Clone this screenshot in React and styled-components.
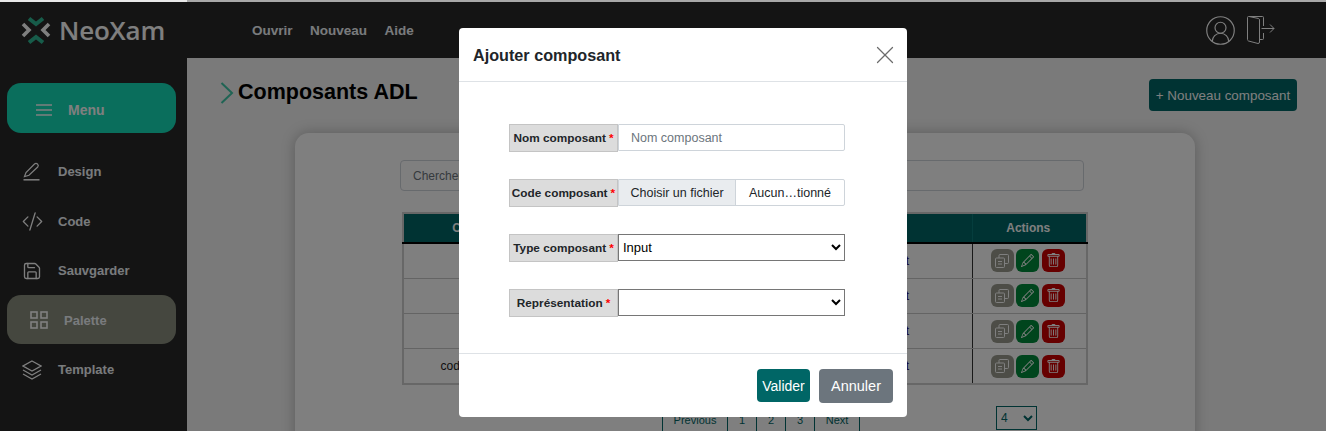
import React from "react";
import styled, { createGlobalStyle } from "styled-components";
import { BsCodeSlash, BsPencil, BsTrash } from "react-icons/bs";
import { CircleUserRound, Save, X } from "lucide-react";

const components = [
  { code: "C1", type: "Input" },
  { code: "C2", type: "Input" },
  { code: "C3", type: "Input" },
  { code: "code-input", type: "Input" },
];

const GlobalStyle = createGlobalStyle`
  html, body {
    margin: 0;
    height: 431px;
    overflow: hidden;
    background: #f4f4f4;
    font-family: "Liberation Sans", Arial, sans-serif;
  }
  * { box-sizing: border-box; }
`;

const Logo = () => (
  <svg width="30" height="29" viewBox="0 0 30 29" fill="none">
    <g stroke="#2fb894" strokeWidth="4">
      <path d="M8 2.5 L15 8 L22 2.5" />
      <path d="M8 26.5 L15 21 L22 26.5" />
    </g>
    <g stroke="#ffffff" strokeWidth="3.6">
      <path d="M2 8 L8 14 L2 20" />
      <path d="M28 8 L22 14 L28 20" />
    </g>
  </svg>
);

const DesignIcon = () => (
  <svg width="18" height="20" viewBox="0 0 18 20" fill="none" stroke="#fff" strokeWidth="1.2">
    <path d="M1.5 14.5 L3 10.5 L11.5 2 Q13 0.8 14.5 2 Q16 3.5 14.7 5 L6 13.3 Z" />
    <path d="M0.5 17.8 H16.5" strokeWidth="1.5" />
  </svg>
);

const PaletteIcon = () => (
  <svg width="18" height="18" viewBox="0 0 18 18" fill="none" stroke="#fff" strokeWidth="1.6">
    <rect x="1" y="1" width="6" height="6" />
    <rect x="11" y="1" width="6" height="6" />
    <rect x="1" y="11" width="6" height="6" />
    <rect x="11" y="11" width="6" height="6" />
  </svg>
);

const LayersIcon = () => (
  <svg width="20" height="20" viewBox="0 0 20 20" fill="none" stroke="#fff" strokeWidth="1.3">
    <path d="M10 1 L19 6 L10 11 L1 6 Z" />
    <path d="M1 10 L10 15 L19 10" />
    <path d="M1 14 L10 19 L19 14" />
  </svg>
);

const DoorIcon = () => (
  <svg width="28" height="28" viewBox="0 0 28 28" fill="none" stroke="#fff" strokeWidth="1">
    <path d="M16.5 10 V1.5 Q16.5 0.5 15.5 0.5 H1.5 Q0.5 0.5 0.5 1.5 V23.5 Q0.5 24.5 1.5 25 L11 27.5 Q12.5 27.5 12.5 26 V4 Q12.5 3 11.5 2.5 L2 0.5" />
    <path d="M12.5 23.5 H15.5 Q16.5 23.5 16.5 22.5 V17" />
    <path d="M14.5 12.5 H27 M23 8.5 L27 12.5 L23 16.5" />
  </svg>
);

const CopyIcon = () => (
  <svg width="14" height="14" viewBox="0 0 14 14" fill="none" stroke="#fff" strokeWidth="1">
    <rect x="0.5" y="4" width="9" height="9.5" rx="1" />
    <path d="M4 4 V1.5 Q4 0.5 5 0.5 H12.5 Q13.5 0.5 13.5 1.5 V8.5 Q13.5 9.5 12.5 9.5 H9.5" />
    <path d="M3 7.5 H7 M3 10 H7" />
  </svg>
);

const MenuIcon = () => (
  <svg width="16" height="12" viewBox="0 0 16 12" stroke="#fff" strokeWidth="1.6">
    <path d="M0 1 H16 M0 6 H16 M0 11 H16" />
  </svg>
);

const App = () => {
  return (
    <>
      <GlobalStyle />
      <TopStrip>
        <StripLeft />
        <StripRight />
      </TopStrip>
      <Header>
        <Brand>
          <Logo />
          <BrandName>NeoXam</BrandName>
        </Brand>
        <Nav>
          <NavLink>Ouvrir</NavLink>
          <NavLink>Nouveau</NavLink>
          <NavLink>Aide</NavLink>
        </Nav>
        <HeaderIcons>
          <CircleUserRound size={33} color="#fff" strokeWidth={0.85} />
          <DoorIcon />
        </HeaderIcons>
      </Header>
      <Body>
        <Sidebar>
          <MenuButton>
            <MenuIcon />
            <span>Menu</span>
          </MenuButton>
          <SideItem>
            <SideIcon><DesignIcon /></SideIcon>
            <span>Design</span>
          </SideItem>
          <SideItem>
            <SideIcon><BsCodeSlash size={21} /></SideIcon>
            <span>Code</span>
          </SideItem>
          <SideItem>
            <SideIcon><Save size={20} strokeWidth={1.6} /></SideIcon>
            <span>Sauvgarder</span>
          </SideItem>
          <SideItem $active>
            <SideIcon><PaletteIcon /></SideIcon>
            <span>Palette</span>
          </SideItem>
          <SideItem>
            <SideIcon><LayersIcon /></SideIcon>
            <span>Template</span>
          </SideItem>
        </Sidebar>
        <Main>
          <TitleRow>
            <Title>
              <svg width="14" height="22" viewBox="0 0 14 22" fill="none" stroke="#3fc8a8" strokeWidth="2">
                <path d="M1.5 1 L12 11 L1.5 21" />
              </svg>
              <h1>Composants ADL</h1>
            </Title>
            <NewButton>+ Nouveau composant</NewButton>
          </TitleRow>
          <Card>
            <Search placeholder="Chercher..." readOnly />
            <Table>
              <colgroup>
                <col style={{ width: 130 }} />
                <col style={{ width: 287 }} />
                <col style={{ width: 152 }} />
                <col style={{ width: 115 }} />
              </colgroup>
              <thead>
                <tr>
                  <Th>Code</Th>
                  <Th>Nom</Th>
                  <Th $shift>Type</Th>
                  <Th>Actions</Th>
                </tr>
              </thead>
              <tbody>
                {components.map((c) => (
                  <tr key={c.code}>
                    <Td>{c.code}</Td>
                    <Td>{c.code}</Td>
                    <Td><TypeLink>{c.type}</TypeLink></Td>
                    <ActionsCell>
                      <Actions>
                        <ActionButton $color="#9a9b8e"><CopyIcon /></ActionButton>
                        <ActionButton $color="#008a3a"><BsPencil size={13} /></ActionButton>
                        <ActionButton $color="#cc0000"><BsTrash size={15} /></ActionButton>
                      </Actions>
                    </ActionsCell>
                  </tr>
                ))}
              </tbody>
            </Table>
            <PaginationRow>
              <Pagination>
                <PageLink $width={66}>Previous</PageLink>
                <PageLink $width={30}>1</PageLink>
                <PageLink $width={30}>2</PageLink>
                <PageLink $width={30}>3</PageLink>
                <PageLink $width={46}>Next</PageLink>
              </Pagination>
              <PageSize defaultValue="4">
                <option>4</option>
              </PageSize>
            </PaginationRow>
          </Card>
        </Main>
      </Body>
      <Backdrop>
        <Modal>
          <ModalHeader>
            <ModalTitle>Ajouter composant</ModalTitle>
            <X size={30} color="#6c6c6c" strokeWidth={1} />
          </ModalHeader>
          <ModalBody>
            <FormRow>
              <FieldLabel>Nom composant <Req>*</Req></FieldLabel>
              <TextInput placeholder="Nom composant" readOnly />
            </FormRow>
            <FormRow>
              <FieldLabel>Code composant <Req>*</Req></FieldLabel>
              <FilePicker>
                <FileButton>Choisir un fichier</FileButton>
                <FileName>Aucun…tionné</FileName>
              </FilePicker>
            </FormRow>
            <FormRow>
              <FieldLabel>Type composant <Req>*</Req></FieldLabel>
              <SelectInput defaultValue="Input">
                <option>Input</option>
              </SelectInput>
            </FormRow>
            <FormRow>
              <FieldLabel>Représentation <Req>*</Req></FieldLabel>
              <SelectInput defaultValue="">
                <option value=""></option>
              </SelectInput>
            </FormRow>
          </ModalBody>
          <ModalFooter>
            <ValidateButton>Valider</ValidateButton>
            <CancelButton>Annuler</CancelButton>
          </ModalFooter>
        </Modal>
      </Backdrop>
    </>
  );
};

const TopStrip = styled.div`
  display: flex;
  height: 2px;
  position: relative;
  z-index: 20;
`;
const StripLeft = styled.div`
  width: 187px;
  background: #e8e8e8;
`;
const StripRight = styled.div`
  flex: 1;
  background: #a8a8a8;
`;

const Header = styled.header`
  height: 56px;
  background: #282828;
  display: flex;
  align-items: center;
  color: #fff;
`;
const Brand = styled.div`
  width: 252px;
  padding-left: 21px;
  display: flex;
  align-items: center;
  gap: 8px;
`;
const BrandName = styled.span`
  font-family: "Open Sans", sans-serif;
  font-weight: 600;
  font-size: 26px;
  letter-spacing: -0.2px;
  color: #fff;
`;
const Nav = styled.nav`
  display: flex;
  gap: 17.5px;
`;
const NavLink = styled.a`
  font-size: 13.5px;
  font-weight: 700;
  color: #f2f6fa;
`;
const HeaderIcons = styled.div`
  margin-left: auto;
  padding-right: 51px;
  display: flex;
  align-items: center;
  gap: 10px;
`;

const Body = styled.div`
  display: flex;
  height: 373px;
  overflow: hidden;
`;
const Sidebar = styled.aside`
  width: 187px;
  flex: none;
  background: #282828;
  padding: 25px 11px 0 7px;
  color: #f2f6fa;
  font-size: 13px;
  font-weight: 700;
`;
const MenuButton = styled.div`
  height: 50px;
  border-radius: 14px;
  background: #14dcb8;
  display: flex;
  align-items: center;
  gap: 16px;
  padding: 3px 0 0 29px;
  margin-bottom: 13px;
  font-size: 14px;
  color: #fff;
`;
const SideItem = styled.div`
  height: 49.5px;
  padding-top: 2px;
  border-radius: 14px;
  display: flex;
  align-items: center;
  background: ${(p) => (p.$active ? "#8a8e7e" : "transparent")};
  padding-left: ${(p) => (p.$active ? "21px" : "14px")};
  & > span {
    margin-left: ${(p) => (p.$active ? "14px" : "15px")};
  }
`;
const SideIcon = styled.div`
  width: 22px;
  display: flex;
  justify-content: center;
  color: #fff;
`;

const Main = styled.main`
  flex: 1;
  min-width: 0;
  height: 373px;
  overflow: hidden;
  background: #f4f4f4;
`;
const TitleRow = styled.div`
  height: 32px;
  margin-top: 21px;
  padding: 0 29px 0 33px;
  display: flex;
  justify-content: space-between;
`;
const Title = styled.div`
  display: flex;
  align-items: center;
  gap: 4px;
  height: 27px;
  & h1 {
    margin: 0;
    font-size: 21.5px;
    font-weight: 700;
    color: #000;
  }
`;
const NewButton = styled.button`
  width: 148px;
  height: 32px;
  border: 0;
  border-radius: 4px;
  background: #006666;
  color: #fff;
  padding: 0;
  font-family: inherit;
  font-size: 13.4px;
`;
const Card = styled.section`
  width: 900px;
  height: 400px;
  margin: 22px 0 0 108px;
  padding: 27px 0 0 105px;
  background: #fff;
  border-radius: 14px;
  box-shadow: 0 0 14px rgba(0, 0, 0, 0.25);
`;
const Search = styled.input`
  display: block;
  width: 684px;
  height: 31px;
  padding: 0 12px;
  border: 1px solid #ced4da;
  border-radius: 4px;
  font-family: inherit;
  font-size: 12px;
  &::placeholder { color: #6c757d; }
`;
const Table = styled.table`
  width: 684px;
  margin: 21px 0 0 2px;
  border-collapse: collapse;
  table-layout: fixed;
  font-size: 12px;
  border: 2px solid #cfcfcf;
`;
const Th = styled.th`
  height: 30px;
  padding: 0 ${(p) => (p.$shift ? "14px" : "2px")} 0 0;
  background: #006666;
  color: #fff;
  font-size: 12px;
  border-bottom: 2px solid #000;
  border-right: 1px solid #0a7a7a;
`;
const Td = styled.td`
  height: 35.3px;
  padding: 0;
  text-align: center;
  color: #222;
  border-bottom: 1px solid #c8c8c8;
`;
const ActionsCell = styled(Td)`
  border-left: 1px solid #333;
  padding-right: 3px;
`;
const TypeLink = styled.a`
  color: #1a0a6e;
`;
const Actions = styled.div`
  display: flex;
  justify-content: center;
  gap: 2.5px;
`;
const ActionButton = styled.div`
  width: 23px;
  height: 23px;
  border-radius: 6px;
  background: ${(p) => p.$color};
  color: #fff;
  display: flex;
  align-items: center;
  justify-content: center;
`;
const PaginationRow = styled.div`
  display: flex;
  align-items: flex-start;
  margin: 21px 0 0 263px;
`;
const Pagination = styled.div`
  display: flex;
  margin-top: 2px;
`;
const PageLink = styled.a`
  width: ${(p) => p.$width}px;
  height: 24px;
  display: flex;
  align-items: center;
  justify-content: center;
  font-size: 11px;
  color: #006666;
  border: 1px solid #006666;
  margin-left: -1px;
`;
const PageSize = styled.select`
  width: 41px;
  height: 24px;
  margin-left: 136px;
  background: transparent;
  border: 1px solid #006666;
  color: #006666;
  font-family: inherit;
  font-size: 12px;
`;

const Backdrop = styled.div`
  position: fixed;
  inset: 0;
  z-index: 10;
  padding-left: 459px;
  background: rgba(0, 0, 0, 0.5);
`;
const Modal = styled.div`
  width: 448px;
  height: 389px;
  margin-top: 28px;
  background: #fff;
  border-radius: 4px;
  display: flex;
  flex-direction: column;
`;
const ModalHeader = styled.div`
  height: 54px;
  padding: 1px 7px 0 14px;
  display: flex;
  align-items: center;
  justify-content: space-between;
  border-bottom: 1px solid #dee2e6;
`;
const ModalTitle = styled.h5`
  margin: 0;
  font-size: 16.2px;
  font-weight: 700;
  color: #212529;
`;
const ModalBody = styled.div`
  flex: 1;
  padding: 42px 62px 0 50px;
  display: flex;
  flex-direction: column;
  gap: 27px;
`;
const FormRow = styled.div`
  display: flex;
  height: 28px;
`;
const FieldLabel = styled.label`
  width: 109px;
  flex: none;
  background: #dcdcdc;
  border: 1px solid #c4c4c4;
  display: flex;
  align-items: center;
  justify-content: center;
  gap: 3px;
  font-size: 11.8px;
  font-weight: 700;
  color: #212529;
  white-space: nowrap;
`;
const Req = styled.span`
  color: #f00;
`;
const TextInput = styled.input`
  flex: 1;
  min-width: 0;
  height: 27px;
  padding: 0 12px;
  border: 1px solid #ced4da;
  border-radius: 0 2px 2px 0;
  font-family: inherit;
  font-size: 12.5px;
  &::placeholder { color: #6c757d; }
`;
const FilePicker = styled.div`
  flex: 1;
  height: 27px;
  display: flex;
  border: 1px solid #ced4da;
  border-radius: 0 2px 2px 0;
  font-size: 12.5px;
  color: #212529;
`;
const FileButton = styled.div`
  width: 117px;
  background: #e9ecef;
  border-right: 1px solid #ced4da;
  display: flex;
  align-items: center;
  justify-content: center;
`;
const FileName = styled.div`
  flex: 1;
  display: flex;
  align-items: center;
  justify-content: center;
`;
const SelectInput = styled.select`
  flex: 1;
  min-width: 0;
  height: 27px;
  background: #fff;
  border: 1px solid #767676;
  color: #000;
  font-family: inherit;
  font-size: 13px;
`;
const ModalFooter = styled.div`
  height: 64px;
  padding: 0 14px;
  display: flex;
  align-items: center;
  justify-content: flex-end;
  gap: 9px;
  border-top: 1px solid #dee2e6;
`;
const ValidateButton = styled.button`
  width: 53px;
  height: 33px;
  padding: 0;
  border: 0;
  border-radius: 4px;
  background: #006666;
  color: #fff;
  font-family: inherit;
  font-size: 14px;
`;
const CancelButton = styled(ValidateButton)`
  width: 74px;
  height: 34px;
  background: #6c757d;
  font-size: 14.5px;
`;

export default App;
